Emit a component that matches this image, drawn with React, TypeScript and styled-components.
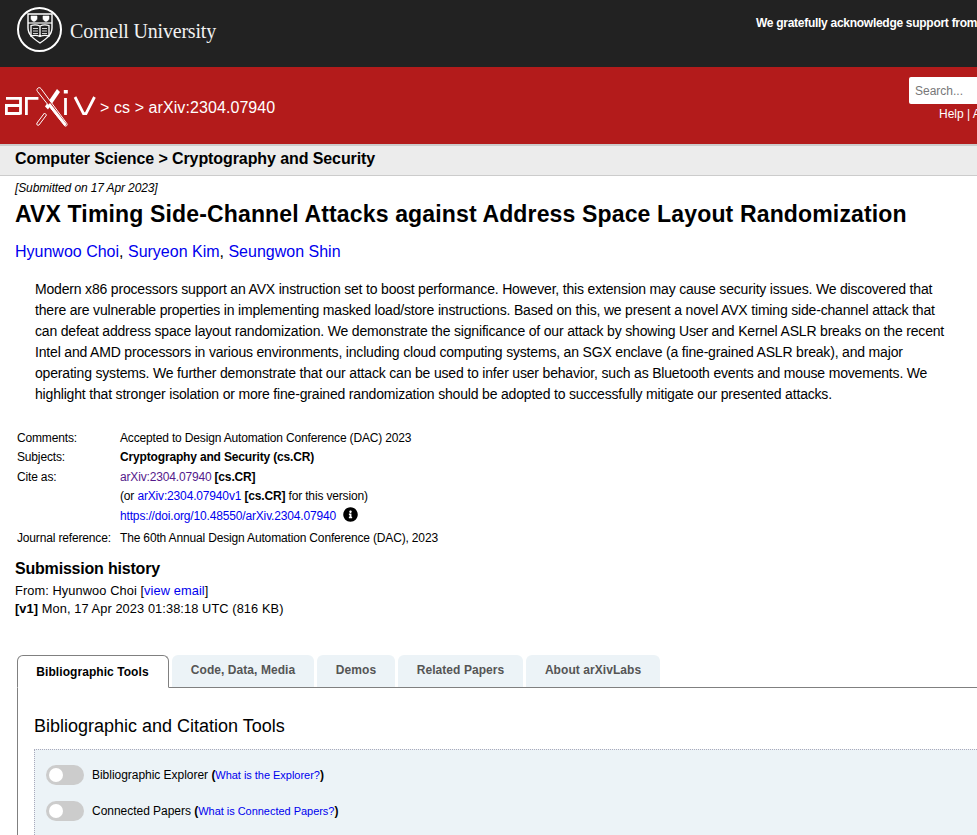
import React from "react";
import styled, { createGlobalStyle } from "styled-components";
import { FaInfoCircle } from "react-icons/fa";

const Global = createGlobalStyle`
  html, body { margin: 0; padding: 0; height: 835px; overflow: hidden; background: #fff; }
  body { font-family: "Liberation Sans", Arial, sans-serif; color: #000; }
  #root { width: 977px; height: 835px; overflow: hidden; }
`;

const Page = styled.div`
  width: 977px;
  height: 835px;
  overflow: hidden;
`;
const TopBar = styled.header`
  height: 67px;
  background: #222;
  display: flex;
  color: #fff;
`;
const CornellBrand = styled.div`
  width: 756px;
  flex: none;
  display: flex;
  align-items: center;
  padding: 0 0 8px 16px;
  box-sizing: border-box;
  gap: 7px;
`;
const CornellName = styled.span`
  font-family: "Liberation Serif", "Times New Roman", serif;
  font-size: 20px;
  letter-spacing: -0.19px;
  color: #f2f2f2;
  white-space: nowrap;
  padding-top: 3px;
`;
const Support = styled.div`
  flex: none;
  white-space: nowrap;
  font-size: 12px;
  font-weight: 700;
  letter-spacing: -0.28px;
  padding-top: 16px;
  line-height: 15px;
`;
const RedBar = styled.div`
  height: 77px;
  background: #b31b1b;
  display: flex;
  color: #fff;
`;
const RedLeft = styled.div`
  width: 909px;
  flex: none;
  display: flex;
  align-items: flex-start;
  padding: 13px 0 0 0;
  box-sizing: border-box;
`;
const Crumb = styled.div`
  font-size: 16px;
  line-height: 18px;
  letter-spacing: 0.08px;
  margin: 19px 0 0 3px;
  white-space: nowrap;
`;
const SearchCol = styled.div`
  flex: none;
  width: 200px;
  padding-top: 10px;
`;
const SearchBox = styled.div`
  height: 27px;
  background: #fff;
  border-radius: 2px;
  color: #777;
  font-size: 12px;
  line-height: 28px;
  padding-left: 6px;
`;
const HelpLine = styled.div`
  font-size: 12px;
  line-height: 14px;
  margin: 3px 0 0 30px;
  white-space: nowrap;
`;
const SubHeader = styled.div`
  height: 29px;
  background: #ececec;
  border-top: 2px solid #ccc;
  border-bottom: 1px solid #ccc;
  padding-left: 15px;
  font-size: 16px;
  font-weight: 700;
  letter-spacing: -0.09px;
  line-height: 25px;
`;
const Content = styled.main`
  padding-left: 15px;
`;
const Dateline = styled.div`
  font-size: 12px;
  font-style: italic;
  letter-spacing: -0.12px;
  line-height: 14px;
  padding-top: 5px;
`;
const Title = styled.h1`
  margin: 6px 0 0;
  font-size: 23.04px;
  letter-spacing: 0.135px;
  line-height: 27px;
  font-weight: 700;
  white-space: nowrap;
`;
const Authors = styled.div`
  margin-top: 14px;
  font-size: 16px;
  line-height: 20px;
`;
const A = styled.a<{ $visited?: boolean }>`
  color: ${(p) => (p.$visited ? "#551a8b" : "#0000ee")};
  text-decoration: none;
`;
const Abstract = styled.blockquote`
  margin: 17px 0 0 20px;
  width: 915px;
  font-size: 14px;
  letter-spacing: -0.18px;
  line-height: 21px;
`;
const MetaTable = styled.div`
  margin: 23px 0 0 2px;
  display: grid;
  grid-template-columns: 103px 1fr;
  font-size: 12px;
  letter-spacing: -0.16px;
  line-height: 14px;
`;
const MetaLabel = styled.div<{ $h: number }>`
  height: ${(p) => p.$h}px;
  padding-top: 3px;
  box-sizing: border-box;
`;
const MetaValue = styled.div<{ $h: number; $bold?: boolean }>`
  height: ${(p) => p.$h}px;
  padding-top: 3px;
  box-sizing: border-box;
  font-weight: ${(p) => (p.$bold ? 700 : 400)};
  white-space: nowrap;
  display: flex;
  gap: 3px;
`;
const InfoMark = styled.span`
  display: block;
  margin: -2px 0 0 4px;
  font-size: 15px;
  line-height: 15px;
  height: 15px;
`;
const HistoryTitle = styled.h2`
  margin: 11px 0 0;
  font-size: 16px;
  letter-spacing: -0.2px;
  line-height: 19px;
  font-weight: 700;
`;
const HistoryText = styled.div`
  margin-top: 4px;
  font-size: 12.8px;
  letter-spacing: 0.09px;
  line-height: 18px;
`;
const Tabs = styled.div`
  margin: 37px 0 0 2px;
  display: flex;
  gap: 3px;
  height: 33px;
  box-sizing: border-box;
  border-bottom: 1px solid #808080;
  width: 1000px;
`;
const Tab = styled.div<{ $active?: boolean; $w: number }>`
  width: ${(p) => p.$w}px;
  height: ${(p) => (p.$active ? 33 : 32)}px;
  box-sizing: border-box;
  text-align: center;
  font-size: 12px;
  letter-spacing: 0.06px;
  font-weight: 700;
  border-radius: 6px 6px 0 0;
  line-height: ${(p) => (p.$active ? 32 : 30)}px;
  padding-right: ${(p) => (p.$active ? 1 : 0)}px;
  color: ${(p) => (p.$active ? "#000" : "#555")};
  background: ${(p) => (p.$active ? "#fff" : "#ecf3f7")};
  border: ${(p) => (p.$active ? "1px solid #808080" : "none")};
  border-bottom: ${(p) => (p.$active ? "1px solid #fff" : "none")};
`;
const Panel = styled.section`
  margin-left: 2px;
  border-left: 1px solid #808080;
  padding-left: 16px;
  height: 200px;
`;
const PanelTitle = styled.h3`
  margin: 0;
  padding-top: 28px;
  font-size: 18px;
  line-height: 21px;
  font-weight: 400;
`;
const ToolBox = styled.div`
  margin-top: 12px;
  background: #ecf3f7;
  border-top: 1px dotted #aab;
  border-left: 1px dotted #aab;
  padding: 15px 0 0 11px;
  height: 200px;
  display: flex;
  flex-direction: column;
  gap: 16px;
`;
const ToolRow = styled.div`
  display: flex;
  align-items: center;
  gap: 8px;
  height: 20px;
  font-size: 12px;
  letter-spacing: -0.03px;
`;
const Switch = styled.span`
  width: 38px;
  height: 20px;
  border-radius: 10px;
  background: #ccc;
  position: relative;
  flex: none;
  &::after {
    content: "";
    position: absolute;
    left: 3px;
    top: 3px;
    width: 14px;
    height: 14px;
    border-radius: 50%;
    background: #fff;
  }
`;
const SmallLink = styled.a`
  font-size: 11px;
  color: #0000ee;
  letter-spacing: -0.03px;
  text-decoration: none;
`;
const Paren = styled.span`
  font-size: 12px;
  font-weight: 700;
`;

const Seal = () => (
  <svg width="47" height="47" viewBox="0 0 47 47" fill="none" stroke="#fff">
    <circle cx="23.5" cy="23.5" r="21.5" strokeWidth="2" />
    <path d="M12 8h24v14c0 7-6 11-12 15-6-4-12-8-12-15z" strokeWidth="1.4" />
    <path d="M12 17h24" strokeWidth="1.2" />
    <path d="M15 10h6v2.500c0 1.500-1.500 2.500-3 3-1.500-.5-3-1.500-3-3zM27 10h6v2.500c0 1.500-1.500 2.500-3 3-1.500-.5-3-1.500-3-3z" fill="#fff" strokeWidth=".6" />
    <path d="M15 19.500c3-1 6-1 9 .5 3-1.500 6-1.500 9-.5v10.500c-3-1-6-1-9 .5-3-1.500-6-1.500-9-.5zM24 20v10.500" strokeWidth="1.300" />
    <path d="M17 22.500h5M17 25h5M17 27.500h5M26 22.500h5M26 25h5M26 27.500h5" strokeWidth=".8" />
  </svg>
);

const ArxivLogo = () => (
  <svg width="97" height="50" viewBox="0 0 97 50" fill="none" role="img" aria-label="arXiv" style={{ flex: "none" }}>
    <g stroke="#fff" strokeWidth="2.800">
      <path d="M6 18.400h14.500v16M20.500 25.500H6.400v8H20.500" />
      <path d="M26.400 35V18.400h12" />
      <path d="M65.500 18v17" />
      <path d="M75 17l8.500 16.600h2.500L94.500 17" />
    </g>
    <rect x="63.800" y="10" width="4" height="3.500" fill="#fff" />
    <path d="M57 9L45 26.500l3 3L60 12z" fill="#fff" />
    <path d="M37.200 8.800c1.200-1.500 2.800-1.500 3.800-.2L66.800 43.500c1 1.500-.5 3.300-2 2.500L37.500 11.500c-.7-.9-.8-1.800-.3-2.700z" fill="#b31b1b" stroke="#fff" strokeWidth="1" />
    <path d="M48 25l7 9 9 11c1 1.500 2.800.2 2-1.500L50 23z" fill="#fff" />
    <path d="M44.500 33L37 43c-1 1.500.8 3 2 2l7.500-10z" fill="#b31b1b" stroke="#fff" strokeWidth="1" />
  </svg>
);

export default function App() {
  return (
    <Page>
      <Global />
      <TopBar>
        <CornellBrand>
          <Seal />
          <CornellName>Cornell University</CornellName>
        </CornellBrand>
        <Support>We gratefully acknowledge support from the Simons Foundation and member institutions.</Support>
      </TopBar>
      <RedBar>
        <RedLeft>
          <ArxivLogo />
          <Crumb>&gt; cs &gt; arXiv:2304.07940</Crumb>
        </RedLeft>
        <SearchCol>
          <SearchBox>Search...</SearchBox>
          <HelpLine>Help | Advanced Search</HelpLine>
        </SearchCol>
      </RedBar>
      <SubHeader>Computer Science &gt; Cryptography and Security</SubHeader>
      <Content>
        <Dateline>[Submitted on 17 Apr 2023]</Dateline>
        <Title>AVX Timing Side-Channel Attacks against Address Space Layout Randomization</Title>
        <Authors>
          <A href="#">Hyunwoo Choi</A>, <A href="#">Suryeon Kim</A>, <A href="#">Seungwon Shin</A>
        </Authors>
        <Abstract>
          Modern x86 processors support an AVX instruction set to boost performance. However, this extension may cause security issues. We discovered that there are vulnerable properties in implementing masked load/store instructions. Based on this, we present a novel AVX timing side-channel attack that can defeat address space layout randomization. We demonstrate the significance of our attack by showing User and Kernel ASLR breaks on the recent Intel and AMD processors in various environments, including cloud computing systems, an SGX enclave (a fine-grained ASLR break), and major operating systems. We further demonstrate that our attack can be used to infer user behavior, such as Bluetooth events and mouse movements. We highlight that stronger isolation or more fine-grained randomization should be adopted to successfully mitigate our presented attacks.
        </Abstract>
        <MetaTable>
          <MetaLabel $h={19}>Comments:</MetaLabel>
          <MetaValue $h={19}>Accepted to Design Automation Conference (DAC) 2023</MetaValue>
          <MetaLabel $h={20}>Subjects:</MetaLabel>
          <MetaValue $h={20} $bold>Cryptography and Security (cs.CR)</MetaValue>
          <MetaLabel $h={19}>Cite as:</MetaLabel>
          <MetaValue $h={19}><A href="#" $visited>arXiv:2304.07940</A> <b>[cs.CR]</b></MetaValue>
          <MetaLabel $h={20} />
          <MetaValue $h={20}><span>(or <A href="#">arXiv:2304.07940v1</A> <b>[cs.CR]</b> for this version)</span></MetaValue>
          <MetaLabel $h={22} />
          <MetaValue $h={22}>
            <A href="#">https://doi.org/10.48550/arXiv.2304.07940</A>
            <InfoMark><FaInfoCircle /></InfoMark>
          </MetaValue>
          <MetaLabel $h={20}>Journal reference:</MetaLabel>
          <MetaValue $h={20}>The 60th Annual Design Automation Conference (DAC), 2023</MetaValue>
        </MetaTable>
        <HistoryTitle>Submission history</HistoryTitle>
        <HistoryText>
          From: Hyunwoo Choi [<A href="#">view email</A>]<br />
          <b>[v1]</b> Mon, 17 Apr 2023 01:38:18 UTC (816 KB)
        </HistoryText>
        <Tabs>
          <Tab $active $w={152}>Bibliographic Tools</Tab>
          <Tab $w={142}>Code, Data, Media</Tab>
          <Tab $w={78}>Demos</Tab>
          <Tab $w={125}>Related Papers</Tab>
          <Tab $w={134}>About arXivLabs</Tab>
        </Tabs>
        <Panel>
          <PanelTitle>Bibliographic and Citation Tools</PanelTitle>
          <ToolBox>
            <ToolRow>
              <Switch />
              <span>Bibliographic Explorer <Paren>(</Paren><SmallLink href="#">What is the Explorer?</SmallLink><Paren>)</Paren></span>
            </ToolRow>
            <ToolRow>
              <Switch />
              <span>Connected Papers <Paren>(</Paren><SmallLink href="#">What is Connected Papers?</SmallLink><Paren>)</Paren></span>
            </ToolRow>
          </ToolBox>
        </Panel>
      </Content>
    </Page>
  );
}
